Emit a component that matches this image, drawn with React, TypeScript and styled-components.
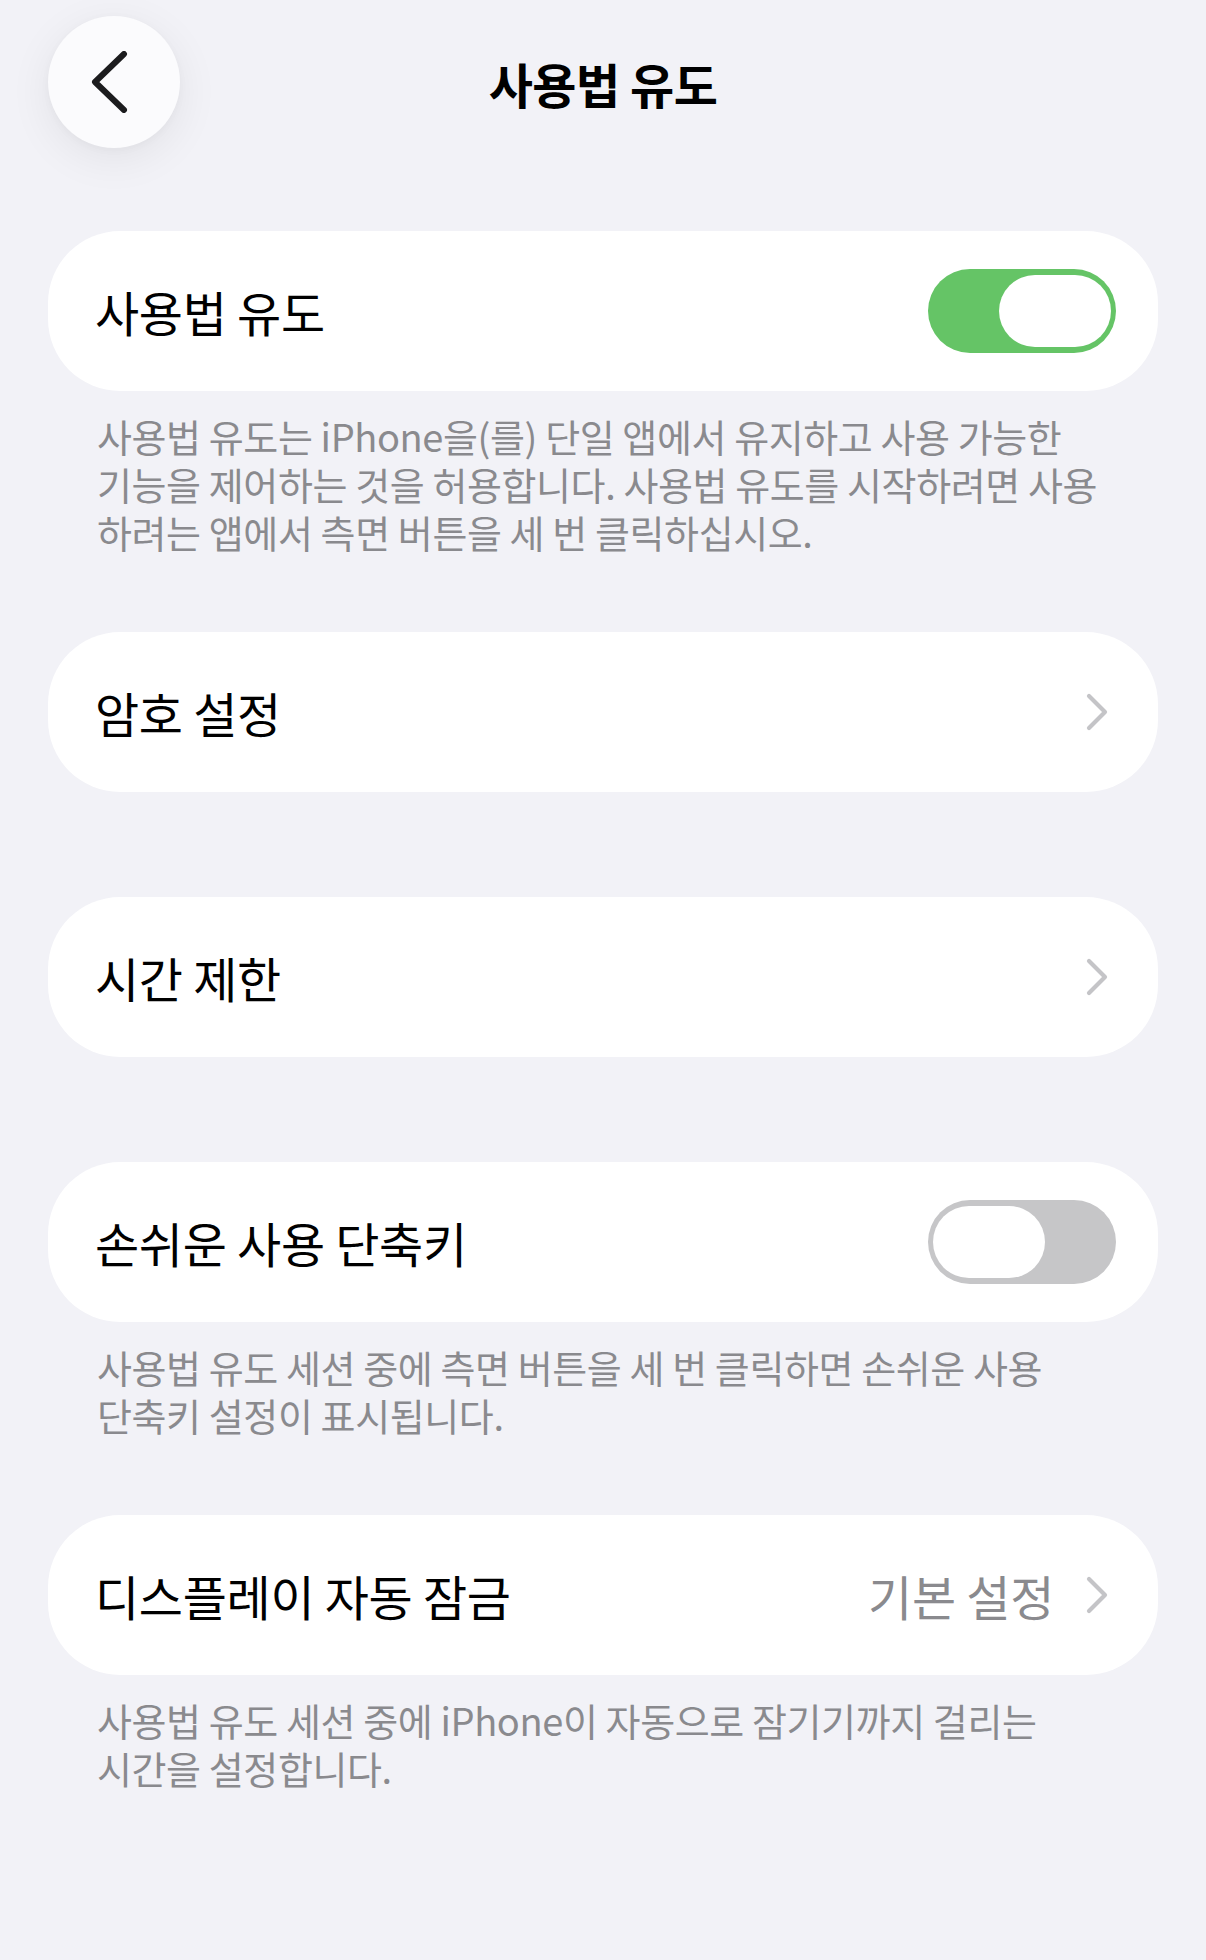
import React, { useState } from 'react';
import styled, { createGlobalStyle } from 'styled-components';

const GlobalStyle = createGlobalStyle`
  html, body {
    margin: 0;
    padding: 0;
    background: #f2f2f7;
  }
  body {
    font-family: "Noto Sans CJK KR", "Noto Sans", "Liberation Sans", sans-serif;
    color: #000;
    -webkit-font-smoothing: antialiased;
  }
`;

const Page = styled.div`
  width: 1206px;
  min-height: 1960px;
  box-sizing: border-box;
  padding: 16px 48px 0;
  background: #f2f2f7;
`;

const Header = styled.div`
  display: grid;
  grid-template-columns: 132px 1fr 132px;
  align-items: center;
  margin-bottom: 83px;
`;

const BackButton = styled.button`
  width: 132px;
  height: 132px;
  border-radius: 50%;
  border: none;
  background: #fbfbfd;
  box-shadow: 0 10px 44px rgba(0, 0, 0, 0.07), 0 2px 8px rgba(0, 0, 0, 0.03);
  display: flex;
  align-items: center;
  justify-content: center;
  padding: 0;
  cursor: pointer;

  svg {
    margin-right: 10px;
  }
`;

const Title = styled.h1`
  margin: 0;
  text-align: center;
  font-size: 48px;
  font-weight: 600;
  letter-spacing: -0.5px;
  line-height: 1;
  padding-top: 2px;
`;

const Section = styled.div<{ $last?: boolean }>`
  margin-bottom: ${({ $last }) => ($last ? '0' : '105px')};
`;

const Card = styled.div`
  height: 160px;
  background: #ffffff;
  border-radius: 72px;
  display: flex;
  align-items: center;
  padding: 0 42px 0 47px;
  box-sizing: border-box;
  cursor: default;
`;

const Label = styled.div`
  flex: 1;
  font-size: 48px;
  font-weight: 400;
  letter-spacing: -0.3px;
  white-space: nowrap;
`;

const Value = styled.div`
  font-size: 48px;
  color: #8a8a8e;
  letter-spacing: -0.3px;
  margin-right: 32px;
  white-space: nowrap;
`;

const ChevronWrap = styled.div`
  display: flex;
  align-items: center;
  margin-right: 8px;
`;

const Footer = styled.div`
  padding: 21px 0 0 49px;
  margin-bottom: -29px;
  color: #8a8a8e;
`;

const FooterLine = styled.div`
  height: 48px;
  display: flex;
  align-items: center;
  font-size: 38px;
  line-height: 1;
  letter-spacing: -0.4px;
  white-space: nowrap;
`;

const Track = styled.button<{ $on: boolean }>`
  width: 188px;
  height: 84px;
  border-radius: 42px;
  border: none;
  padding: 6px 5px;
  box-sizing: border-box;
  display: flex;
  justify-content: ${({ $on }) => ($on ? 'flex-end' : 'flex-start')};
  background: ${({ $on }) => ($on ? '#65c466' : '#c6c6c8')};
  cursor: pointer;
`;

const Knob = styled.span`
  width: 112px;
  height: 72px;
  border-radius: 36px;
  background: #ffffff;
`;

const BackIcon = () => (
  <svg width="38" height="62" viewBox="0 0 38 62">
    <path
      d="M34 3 L5 31 L34 59"
      fill="none"
      stroke="#1c1c1e"
      strokeWidth="6"
      strokeLinecap="round"
      strokeLinejoin="round"
    />
  </svg>
);

const Chevron = () => (
  <ChevronWrap>
    <svg width="22" height="38" viewBox="0 0 22 38">
      <path
        d="M3 3 L19 19 L3 35"
        fill="none"
        stroke="#c4c4c7"
        strokeWidth="4.2"
        strokeLinecap="round"
        strokeLinejoin="round"
      />
    </svg>
  </ChevronWrap>
);

const Toggle: React.FC<{ on: boolean; onChange: () => void }> = ({ on, onChange }) => (
  <Track $on={on} onClick={onChange}>
    <Knob />
  </Track>
);

// footer text keeps the reference's line breaks
const FooterText: React.FC<{ lines: string[] }> = ({ lines }) => (
  <Footer>
    {lines.map(line => (
      <FooterLine key={line}>{line}</FooterLine>
    ))}
  </Footer>
);

export default function App() {
  const [guided, setGuided] = useState(true);
  const [shortcut, setShortcut] = useState(false);

  return (
    <>
      <GlobalStyle />
      <Page>
        <Header>
          <BackButton>
            <BackIcon />
          </BackButton>
          <Title>사용법 유도</Title>
          <div />
        </Header>

        <Section>
          <Card>
            <Label>사용법 유도</Label>
            <Toggle on={guided} onChange={() => setGuided(v => !v)} />
          </Card>
          <FooterText
            lines={[
              '사용법 유도는 iPhone을(를) 단일 앱에서 유지하고 사용 가능한',
              '기능을 제어하는 것을 허용합니다. 사용법 유도를 시작하려면 사용',
              '하려는 앱에서 측면 버튼을 세 번 클릭하십시오.',
            ]}
          />
        </Section>

        <Section>
          <Card>
            <Label>암호 설정</Label>
            <Chevron />
          </Card>
        </Section>

        <Section>
          <Card>
            <Label>시간 제한</Label>
            <Chevron />
          </Card>
        </Section>

        <Section>
          <Card>
            <Label>손쉬운 사용 단축키</Label>
            <Toggle on={shortcut} onChange={() => setShortcut(v => !v)} />
          </Card>
          <FooterText
            lines={[
              '사용법 유도 세션 중에 측면 버튼을 세 번 클릭하면 손쉬운 사용',
              '단축키 설정이 표시됩니다.',
            ]}
          />
        </Section>

        <Section $last>
          <Card>
            <Label>디스플레이 자동 잠금</Label>
            <Value>기본 설정</Value>
            <Chevron />
          </Card>
          <FooterText
            lines={[
              '사용법 유도 세션 중에 iPhone이 자동으로 잠기기까지 걸리는',
              '시간을 설정합니다.',
            ]}
          />
        </Section>
      </Page>
    </>
  );
}
